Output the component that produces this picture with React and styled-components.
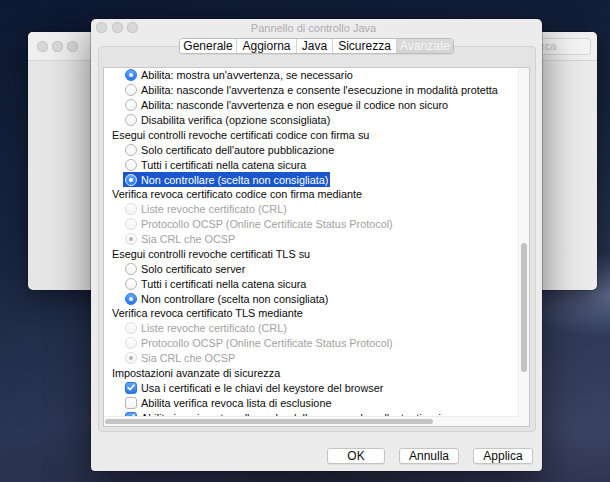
import React from 'react';
import styled, { createGlobalStyle } from 'styled-components';

const GlobalStyle = createGlobalStyle`
  html, body {
    margin: 0;
    padding: 0;
  }
  body {
    width: 610px;
    height: 482px;
    overflow: hidden;
    font-family: "Liberation Sans", Arial, sans-serif;
  }
`;

const Desktop = styled.div`
  position: relative;
  width: 610px;
  height: 482px;
  overflow: hidden;
  background:
    radial-gradient(ellipse 150px 60px at 610px 295px, rgba(125, 135, 170, 0.6), transparent 70%),
    radial-gradient(ellipse 380px 190px at 580px 430px, rgba(75, 85, 122, 0.6), transparent 70%),
    linear-gradient(168deg, #0d1832 0%, #17243f 40%, #2b3654 72%, #20233a 100%);
`;

const BackWindow = styled.div`
  position: absolute;
  left: 28px;
  top: 32px;
  width: 569px;
  height: 258px;
  display: flex;
  flex-direction: column;
  background: linear-gradient(90deg, #e6e6e6, #ebebeb);
  border-radius: 5px;
  box-shadow: 0 8px 28px rgba(0, 0, 0, 0.45), 0 0 0 1px rgba(0, 0, 0, 0.18);
`;

const BackToolbar = styled.div`
  height: 28px;
  display: flex;
  align-items: center;
  gap: 4px;
  padding: 0 6px 0 9px;
  background: #efefef;
  border-bottom: 1px solid #d4d4d4;
  border-radius: 5px 5px 0 0;
`;

const Light = styled.span`
  width: 11px;
  height: 11px;
  border-radius: 50%;
  background: #d8d8d8;
  box-shadow: inset 0 0 0 1px #c8c8c8;
  flex: none;
`;

const NavBox = styled.span`
  margin-left: 11px;
  width: 70px;
  height: 20px;
  border-radius: 4px;
  background: #f7f7f7;
  box-shadow: inset 0 0 0 1px #cfcfcf;
`;

const SearchBox = styled.span`
  margin-left: auto;
  width: 86px;
  height: 17px;
  border-radius: 4px;
  background: #f4f4f4;
  box-shadow: inset 0 0 0 1px #d6d6d6;
  font-size: 11px;
  line-height: 17px;
  color: #c2c2c2;
  padding-left: 22px;
  box-sizing: border-box;
`;

const Window = styled.div`
  position: absolute;
  left: 91px;
  top: 19px;
  width: 451px;
  height: 452px;
  display: flex;
  flex-direction: column;
  background: #ececec;
  border-radius: 5px 5px 4px 4px;
  box-shadow: 0 14px 40px rgba(0, 0, 0, 0.5), 0 0 0 1px rgba(0, 0, 0, 0.22);
`;

const TitleBar = styled.div`
  height: 17px;
  display: grid;
  grid-template-columns: 1fr auto 1fr;
  align-items: center;
  padding: 0 5px;
`;

const Lights = styled.div`
  display: flex;
  gap: 4.5px;
`;

const Title = styled.span`
  font-size: 11px;
  color: #adadad;
  padding-right: 6px;
`;

const TabRow = styled.div`
  margin-top: 2px;
  display: flex;
  justify-content: center;
  position: relative;
  z-index: 1;
`;

const Tabs = styled.div`
  display: flex;
  height: 16px;
  box-sizing: border-box;
  border: 1px solid #bdbdbd;
  border-radius: 4px;
  background: #fff;
  overflow: hidden;
  box-shadow: 0 1px 0 rgba(0, 0, 0, 0.05);
`;

const Tab = styled.span`
  width: ${(p) => p.$w}px;
  box-sizing: border-box;
  border-left: ${(p) => (p.$first ? 'none' : '1px solid #d2d2d2')};
  font-size: 12px;
  line-height: 14px;
  text-align: center;
  color: ${(p) => (p.$active ? '#f6f6f6' : '#0c0c0c')};
  background: ${(p) => (p.$active ? 'linear-gradient(#dcdcdc, #d3d3d3)' : '#fff')};
`;

const Pane = styled.div`
  margin: -8px 6px 0 7px;
  height: 386px;
  box-sizing: border-box;
  border: 1px solid #d3d3d3;
  border-radius: 4px;
  background: #e4e4e4;
  padding: 20px 5px 4px 4px;
`;

const ScrollPane = styled.div`
  height: 360px;
  box-sizing: border-box;
  border: 1px solid #c7c7c7;
  background: #fff;
  display: grid;
  grid-template-columns: 414px 11px;
  grid-template-rows: 348px 10px;
`;

const Viewport = styled.div`
  overflow: hidden;
`;

const VTrack = styled.div`
  background: #f8f8f8;
  border-left: 1px solid #ececec;
  box-sizing: border-box;
  padding-left: 2px;
`;

const HTrack = styled.div`
  background: #f8f8f8;
  border-top: 1px solid #ececec;
  box-sizing: border-box;
  padding-top: 2px;
  padding-left: 1px;
`;

const Corner = styled.div`
  background: #f8f8f8;
`;

const Thumb = styled.div`
  background: #c3c3c3;
  border-radius: 3px;
  margin-top: ${(p) => p.$offset || 0}px;
  width: ${(p) => (p.$w ? `${p.$w}px` : '6px')};
  height: ${(p) => (p.$h ? `${p.$h}px` : '5px')};
`;

const Row = styled.div`
  height: 14.88px;
  display: flex;
  align-items: stretch;
  padding-left: ${(p) => (p.$header ? 6 : 19)}px;
  white-space: nowrap;
`;

const Item = styled.span`
  display: inline-flex;
  align-items: center;
  gap: 4px;
  padding: 0 2px;
  font-size: 10.85px;
  color: ${(p) => (p.$selected ? '#fff' : p.$disabled ? '#a2a2a2' : '#0a0a0a')};
  background: ${(p) => (p.$selected ? '#1a57cd' : 'transparent')};
`;

const Radio = styled.span`
  flex: none;
  width: 12px;
  height: 12px;
  box-sizing: border-box;
  border-radius: 50%;
  display: flex;
  align-items: center;
  justify-content: center;
  border: 1px solid
    ${(p) => (p.$disabled ? '#dcdcdc' : p.$checked ? (p.$selected ? '#e6eefc' : '#2f74dc') : '#b4b4b4')};
  background: ${(p) =>
    p.$checked && !p.$disabled ? 'linear-gradient(#62a6f8, #2a78ea)' : 'linear-gradient(#fff, #f4f4f4)'};

  &::after {
    content: '';
    display: ${(p) => (p.$checked ? 'block' : 'none')};
    width: 4px;
    height: 4px;
    border-radius: 50%;
    background: ${(p) => (p.$disabled ? '#b3b3b3' : '#fff')};
  }
`;

const Box = styled.span`
  flex: none;
  width: 12px;
  height: 12px;
  box-sizing: border-box;
  border-radius: 3px;
  display: flex;
  align-items: center;
  justify-content: center;
  border: 1px solid ${(p) => (p.$checked ? '#2f74dc' : '#b4b4b4')};
  background: ${(p) => (p.$checked ? 'linear-gradient(#62a6f8, #2a78ea)' : 'linear-gradient(#fff, #f4f4f4)')};
`;

const Footer = styled.div`
  display: flex;
  justify-content: flex-end;
  gap: 14px;
  padding: 16px 9px 0 0;
`;

const Button = styled.button`
  width: ${(p) => p.$w}px;
  height: 16px;
  padding: 0;
  border: 1px solid #c4c4c4;
  border-radius: 3px;
  background: #fff;
  box-shadow: 0 1px 0 rgba(0, 0, 0, 0.06);
  font-family: "Liberation Sans", Arial, sans-serif;
  font-size: 12px;
  line-height: 14px;
  color: #0c0c0c;
`;

const tabs = [
  { label: 'Generale', w: 56 },
  { label: 'Aggiorna', w: 60 },
  { label: 'Java', w: 36 },
  { label: 'Sicurezza', w: 64 },
  { label: 'Avanzate', w: 57, active: true },
];

const rows = [
  { kind: 'radio', label: "Abilita: mostra un'avvertenza, se necessario", checked: true },
  { kind: 'radio', label: "Abilita: nasconde l'avvertenza e consente l'esecuzione in modalità protetta" },
  { kind: 'radio', label: "Abilita: nasconde l'avvertenza e non esegue il codice non sicuro" },
  { kind: 'radio', label: 'Disabilita verifica (opzione sconsigliata)' },
  { kind: 'header', label: 'Esegui controlli revoche certificati codice con firma su' },
  { kind: 'radio', label: "Solo certificato dell'autore pubblicazione" },
  { kind: 'radio', label: 'Tutti i certificati nella catena sicura' },
  { kind: 'radio', label: 'Non controllare (scelta non consigliata)', checked: true, selected: true },
  { kind: 'header', label: 'Verifica revoca certificato codice con firma mediante' },
  { kind: 'radio', label: 'Liste revoche certificato (CRL)', disabled: true },
  { kind: 'radio', label: 'Protocollo OCSP (Online Certificate Status Protocol)', disabled: true },
  { kind: 'radio', label: 'Sia CRL che OCSP', disabled: true, checked: true },
  { kind: 'header', label: 'Esegui controlli revoche certificati TLS su' },
  { kind: 'radio', label: 'Solo certificato server' },
  { kind: 'radio', label: 'Tutti i certificati nella catena sicura' },
  { kind: 'radio', label: 'Non controllare (scelta non consigliata)', checked: true },
  { kind: 'header', label: 'Verifica revoca certificato TLS mediante' },
  { kind: 'radio', label: 'Liste revoche certificato (CRL)', disabled: true },
  { kind: 'radio', label: 'Protocollo OCSP (Online Certificate Status Protocol)', disabled: true },
  { kind: 'radio', label: 'Sia CRL che OCSP', disabled: true, checked: true },
  { kind: 'header', label: 'Impostazioni avanzate di sicurezza' },
  { kind: 'check', label: 'Usa i certificati e le chiavi del keystore del browser', checked: true },
  { kind: 'check', label: 'Abilita verifica revoca lista di esclusione' },
  { kind: 'check', label: "Abilita inserimento nella cache della password per l'autenticazione", checked: true },
];

function Check() {
  return (
    <svg width="8" height="7" viewBox="0 0 8 7">
      <path d="M1 3.6 L3.1 5.6 L7 1" fill="none" stroke="#fff" strokeWidth="1.6" strokeLinecap="round" strokeLinejoin="round" />
    </svg>
  );
}

function SettingRow({ row }) {
  if (row.kind === 'header') {
    return (
      <Row $header>
        <Item>{row.label}</Item>
      </Row>
    );
  }
  return (
    <Row>
      <Item $selected={row.selected} $disabled={row.disabled}>
        {row.kind === 'radio' ? (
          <Radio $checked={row.checked} $disabled={row.disabled} $selected={row.selected} />
        ) : (
          <Box $checked={row.checked}>{row.checked && <Check />}</Box>
        )}
        {row.label}
      </Item>
    </Row>
  );
}

export default function App() {
  return (
    <>
      <GlobalStyle />
      <Desktop>
        <BackWindow>
          <BackToolbar>
            <Light />
            <Light />
            <Light />
            <NavBox />
            <SearchBox>Cerca</SearchBox>
          </BackToolbar>
        </BackWindow>

        <Window>
          <TitleBar>
            <Lights>
              <Light />
              <Light />
              <Light />
            </Lights>
            <Title>Pannello di controllo Java</Title>
            <span />
          </TitleBar>

          <TabRow>
            <Tabs>
              {tabs.map((t, i) => (
                <Tab key={t.label} $w={t.w} $first={i === 0} $active={t.active}>
                  {t.label}
                </Tab>
              ))}
            </Tabs>
          </TabRow>

          <Pane>
            <ScrollPane>
              <Viewport>
                {rows.map((row, i) => (
                  <SettingRow key={i} row={row} />
                ))}
              </Viewport>
              <VTrack>
                <Thumb $offset={175} $h={129} />
              </VTrack>
              <HTrack>
                <Thumb $w={328} $h={5} />
              </HTrack>
              <Corner />
            </ScrollPane>
          </Pane>

          <Footer>
            <Button $w={58}>OK</Button>
            <Button $w={60}>Annulla</Button>
            <Button $w={60}>Applica</Button>
          </Footer>
        </Window>
      </Desktop>
    </>
  );
}
